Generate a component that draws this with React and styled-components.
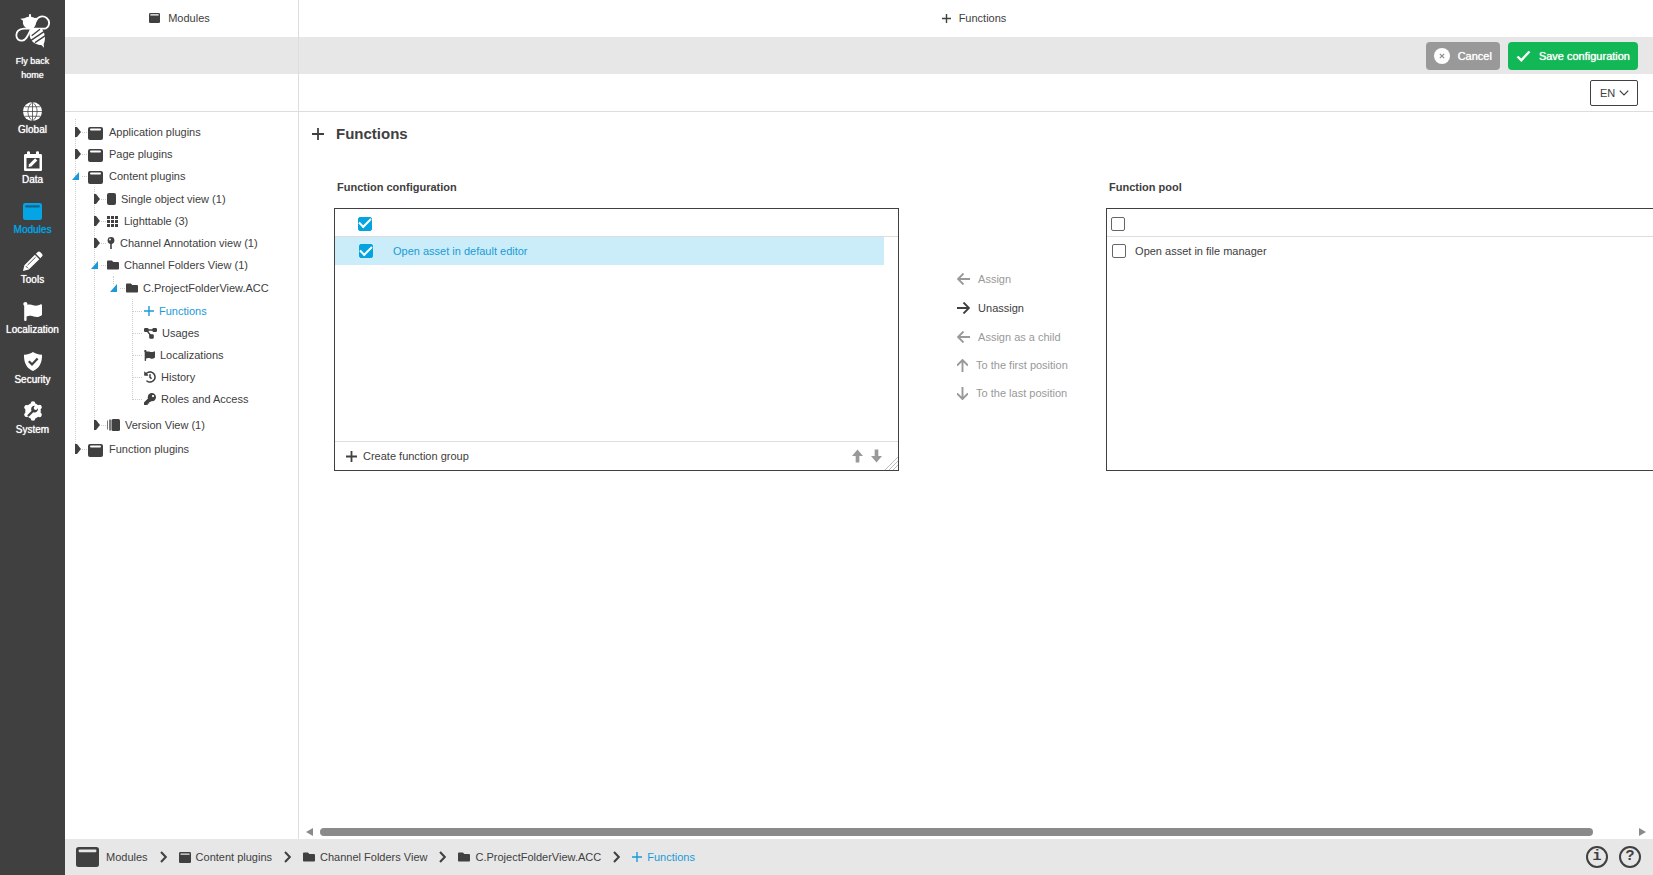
import React, { useState } from 'react';
import styled, { createGlobalStyle, css } from 'styled-components';
import { FaFlag, FaFolder, FaHistory, FaKey } from 'react-icons/fa';

const DARK = '#404040';
const BLUE = '#1a9bd7';
const GREY = '#999';

/* ---------- icons ---------- */

const WindowIcon = ({ width = 11, height = 10, bar = '#fff' }) => (
    <svg width={width} height={height} viewBox="0 0 22 20" preserveAspectRatio="none" aria-hidden="true">
        <rect width="22" height="20" rx="2.5" fill="currentColor" />
        <rect x="2.5" y="2.6" width="17" height="2.6" rx="1" fill={bar} />
    </svg>
);

const TreeWindowIcon = () => (
    <svg width="15" height="18" viewBox="0 0 15 18" aria-hidden="true">
        <rect y="4" width="15" height="13" rx="2" fill="currentColor" />
        <rect x="2" y="5.5" width="11" height="2" rx="1" fill="#fff" />
    </svg>
);

const PlusIcon = ({ size = 10, stroke = 1.4 }) => (
    <svg width={size} height={size} viewBox={`0 0 ${size} ${size}`} aria-hidden="true">
        <path d={`M${size / 2} 0V${size}M0 ${size / 2}H${size}`} stroke="currentColor" strokeWidth={stroke} />
    </svg>
);

const BeeIcon = () => (
    <svg width="35" height="34" viewBox="45 41 105 102" fill="none" aria-hidden="true">
        <path d="M90 85C100 79 104 70 108 62C113 47 130 45 140 53C151 62 149 78 138 84C135 85 131 85 124 85H72C57 86 49 94 49 105C49 116 57 122 67 121C80 119 84 104 92 88" stroke="#fff" strokeWidth="5.4" strokeLinejoin="round" />
        <path d="M88 41H92L94 50C98 50 101 51 104 53L112 52L107 60C110 68 107 77 100 84H80C71 78 67 70 69 61L61 55L73 54C77 51 82 50 86 50Z" fill="#fff" />
        <path d="M93 86C87 97 88 110 94 119C100 129 113 134 124 134L132 142L131 131C137 119 137 101 126 86Z" fill="#fff" />
        <path d="M95 106L120 87M93 120L132 94M105 127L136 106" stroke={DARK} strokeWidth="4" />
    </svg>
);

const GlobeIcon = () => (
    <svg width="19" height="19" viewBox="0 0 20 20" fill="none" aria-hidden="true">
        <circle cx="10" cy="10" r="10" fill="currentColor" />
        <path d="M10 0V20M0 10H20M2 5H18M2 15H18M10 0C3.5 5 3.5 15 10 20M10 0C16.5 5 16.5 15 10 20" stroke={DARK} strokeWidth=".8" />
    </svg>
);

const CalendarIcon = () => (
    <svg width="18" height="20" viewBox="0 0 18 20" aria-hidden="true">
        <path fill="currentColor" fillRule="evenodd" d="M3 1.5C3-.3 6-.3 6 1.5V3h6V1.5c0-1.8 3-1.8 3 0V3h1.5c1 0 1.5.6 1.5 1.5v14c0 1-.5 1.5-1.5 1.5h-15C.5 20 0 19.5 0 18.5v-14C0 3.6.5 3 1.5 3H3zM2.5 7v10.5h13V7z" />
        <path fill="currentColor" d="M4.5 16l.6-2.8 6-6 2.2 2.2-6 6z" />
    </svg>
);

const PencilIcon = () => (
    <svg width="20" height="20" viewBox="0 0 20 20" aria-hidden="true">
        <path fill="currentColor" d="M14.5 1.2c.9-.9 2-.9 2.9 0l1.5 1.5c.9.9.9 2 0 2.9L17.3 7.2 12.9 2.8zM11.9 3.8l4.4 4.4L5.8 18.6 0 20l1.4-5.8z" />
        <path d="M4.5 14.2L12.6 6.2M2.8 15.1L5 17.3" stroke={DARK} strokeWidth=".9" />
    </svg>
);

const ShieldIcon = () => (
    <svg width="18" height="19" viewBox="0 0 18 19" aria-hidden="true">
        <path fill="currentColor" d="M9 0c2 1.6 5 2.5 9 2.7C18.3 11 15 16.5 9 19 3 16.5-.3 11 0 2.7 4 2.5 7 1.6 9 0z" />
        <path d="M4.8 9.3L8 12.4L13.6 6.4" fill="none" stroke={DARK} strokeWidth="2.2" />
    </svg>
);

const SystemIcon = () => (
    <svg width="20" height="20" viewBox="0 0 20 20" aria-hidden="true">
        <circle cx="10" cy="10" r="7.8" fill="currentColor" />
        <g stroke="currentColor" strokeWidth="4.6" strokeLinecap="round">
            <path d="M10 2.5v15M3.5 6.3l13 7.5M3.5 13.7l13-7.5" />
        </g>
        <path d="M5.5 14.5L10.5 9.5" stroke={DARK} strokeWidth="2.2" strokeLinecap="round" />
        <path d="M14.8 7.2a3.4 3.4 0 1 1-3-2.5L10.7 7l.8 1.7 1.8.2z" fill={DARK} />
    </svg>
);

const GridIcon = () => (
    <svg width="12" height="11" viewBox="0 0 12 11" fill="currentColor" aria-hidden="true">
        {[0, 4, 8].map(y => [0, 4, 8].map(x => <rect key={`${x}${y}`} x={x} y={y} width="3" height="3" />))}
    </svg>
);

const PageIcon = () => (
    <svg width="9" height="12" viewBox="0 0 9 12" aria-hidden="true">
        <rect width="9" height="12" rx="2" fill="currentColor" />
    </svg>
);

const PinIcon = () => (
    <svg width="8" height="12" viewBox="0 0 8 12" aria-hidden="true">
        <circle cx="4" cy="3.5" r="3.4" fill="currentColor" />
        <path d="M4 6v6" stroke="currentColor" strokeWidth="1.6" />
        <circle cx="3" cy="2.5" r=".9" fill="#fff" />
    </svg>
);

const NodesIcon = () => (
    <svg width="13" height="12" viewBox="0 0 13 12" aria-hidden="true">
        <path d="M2.5 3H10.5M2.5 3L7.5 9.5" stroke="currentColor" strokeWidth="1.4" />
        <rect y="1" width="4.6" height="4" rx="1.2" fill="currentColor" />
        <rect x="8.4" y="1" width="4.6" height="4" rx="1.2" fill="currentColor" />
        <rect x="5.2" y="7.2" width="4.6" height="4.6" rx="1.2" fill="currentColor" />
    </svg>
);

const VersionIcon = () => (
    <svg width="13" height="12" viewBox="0 0 13 12" fill="currentColor" aria-hidden="true">
        <rect x="4.5" width="8.5" height="12" rx="1.5" />
        <rect x="2.3" y=".5" width="1.4" height="11" />
        <rect y="1.5" width="1" height="9" opacity=".7" />
    </svg>
);

const ArrowIcon = ({ turn = 0 }) => (
    <svg width={turn % 180 ? 11 : 13} height={turn % 180 ? 13 : 12} viewBox={turn % 180 ? '1 0 11 13' : '0 0.5 13 12'} fill="none" aria-hidden="true">
        <path d="M13 6.5H1M6.5 1L1 6.5L6.5 12" stroke="currentColor" strokeWidth="1.9" transform={`rotate(${turn} 6.5 6.5)`} />
    </svg>
);

const BoldArrowIcon = ({ down }) => (
    <svg width="11" height="14" viewBox="0 0 12 14" aria-hidden="true">
        <path d="M6 0L12 7H8V14H4V7H0Z" fill="currentColor" transform={down ? 'rotate(180 6 7)' : undefined} />
    </svg>
);

const ChevronIcon = () => (
    <svg width="7" height="12" viewBox="0 0 7 12" fill="none" aria-hidden="true">
        <path d="M1 1L5.8 6L1 11" stroke="currentColor" strokeWidth="2" />
    </svg>
);

/* ---------- tree ---------- */

const TREE = [
    { label: 'Application plugins', icon: <TreeWindowIcon /> },
    { label: 'Page plugins', icon: <TreeWindowIcon /> },
    {
        label: 'Content plugins', icon: <TreeWindowIcon />, children: [
            { label: 'Single object view (1)', icon: <PageIcon /> },
            { label: 'Lighttable (3)', icon: <GridIcon /> },
            { label: 'Channel Annotation view (1)', icon: <PinIcon /> },
            {
                label: 'Channel Folders View (1)', icon: <FaFolder size={12} />, children: [
                    {
                        label: 'C.ProjectFolderView.ACC', icon: <FaFolder size={12} />, children: [
                            { label: 'Functions', icon: <PlusIcon />, leaf: true, active: true },
                            { label: 'Usages', icon: <NodesIcon />, leaf: true },
                            { label: 'Localizations', icon: <FaFlag size={11} />, leaf: true },
                            { label: 'History', icon: <FaHistory size={12} />, leaf: true },
                            { label: 'Roles and Access', icon: <FaKey size={12} />, leaf: true },
                        ],
                    },
                ],
            },
            { label: 'Version View (1)', icon: <VersionIcon /> },
        ],
    },
    { label: 'Function plugins', icon: <TreeWindowIcon /> },
];

const TreeToggle = ({ open }) => (
    <svg width="16" height="16" viewBox="0 0 16 16" aria-hidden="true">
        {open
            ? <path d="M7 4V12H0Z" fill={BLUE} />
            : <path d="M3 3H5L9 8L5 13H3Z" fill={DARK} />}
        <path d="M10 8.5H15" stroke="#ccc" strokeDasharray="1 1" />
    </svg>
);

const TreeBranch = ({ nodes, depth = 0 }) => (
    <TreeList $depth={depth} $single={nodes.length === 1}>
        {nodes.map(node => (
            <li key={node.label}>
                <TreeRow>
                    {node.leaf
                        ? <LeafLine />
                        : <ToggleButton aria-label={`Toggle ${node.label}`}><TreeToggle open={!!node.children} /></ToggleButton>}
                    <TreeLink href="#" $active={node.active} $root={depth === 0}>{node.icon}{node.label}</TreeLink>
                </TreeRow>
                {node.children && <TreeBranch nodes={node.children} depth={depth + 1} />}
            </li>
        ))}
    </TreeList>
);

/* ---------- page ---------- */

const NAV = [
    { label: 'Global', icon: <GlobeIcon /> },
    { label: 'Data', icon: <CalendarIcon /> },
    { label: 'Modules', icon: <WindowIcon width={19} height={17} bar="#17618a" />, active: true },
    { label: 'Tools', icon: <PencilIcon /> },
    { label: 'Localization', icon: <FaFlag size={19} /> },
    { label: 'Security', icon: <ShieldIcon /> },
    { label: 'System', icon: <SystemIcon /> },
];

const ACTIONS = [
    { label: 'Assign', turn: 0 },
    { label: 'Unassign', turn: 180, enabled: true },
    { label: 'Assign as a child', turn: 0 },
    { label: 'To the first position', turn: 90, vertical: true },
    { label: 'To the last position', turn: 270, vertical: true },
];

const CRUMBS = [
    { label: 'Modules', icon: <WindowIcon width={23} height={20} bar="#e7e7e7" />, large: true },
    { label: 'Content plugins', icon: <WindowIcon width={12} height={11} bar="#e7e7e7" /> },
    { label: 'Channel Folders View', icon: <FaFolder size={12} /> },
    { label: 'C.ProjectFolderView.ACC', icon: <FaFolder size={12} /> },
    { label: 'Functions', icon: <PlusIcon size={10} />, active: true },
];

const App = () => {
    const [allAssigned, setAllAssigned] = useState(true);
    const [editor, setEditor] = useState(true);
    const [allPool, setAllPool] = useState(false);
    const [manager, setManager] = useState(false);

    return (
        <Page>
            <GlobalStyle />
            <Sidebar>
                <HomeLink href="#"><BeeIcon /><span>Fly back<br />home</span></HomeLink>
                {NAV.map(item => (
                    <NavLink href="#" key={item.label} $active={item.active}>
                        <NavIcon>{item.icon}</NavIcon>
                        {item.label}
                    </NavLink>
                ))}
            </Sidebar>

            <Content>
                <Columns>
                    <TreeColumn>
                        <PaneTitle><WindowIcon />Modules</PaneTitle>
                        <GreyBar />
                        <LanguageBar />
                        <nav aria-label="Modules"><TreeBranch nodes={TREE} /></nav>
                    </TreeColumn>

                    <MainColumn>
                        <PaneTitle><PlusIcon size={9} />Functions</PaneTitle>
                        <GreyBar>
                            <BarButton $color="#999">
                                <svg width="16" height="16" viewBox="0 0 16 16" aria-hidden="true">
                                    <circle cx="8" cy="8" r="8" fill="#fff" />
                                    <path d="M5.8 5.8L10.2 10.2M10.2 5.8L5.8 10.2" stroke="#888" strokeWidth="1.1" />
                                </svg>
                                Cancel
                            </BarButton>
                            <BarButton $color="#12b855">
                                <svg width="15" height="12" viewBox="0 0 14 12" fill="none" aria-hidden="true">
                                    <path d="M1 6.5L4.8 10.2L13 1.5" stroke="#fff" strokeWidth="2.4" />
                                </svg>
                                Save configuration
                            </BarButton>
                        </GreyBar>
                        <LanguageBar>
                            <SelectWrap>
                                <LanguageSelect aria-label="Language" defaultValue="EN">
                                    <option>EN</option>
                                    <option>DE</option>
                                </LanguageSelect>
                                <svg width="10" height="6" viewBox="0 0 10 6" fill="none" aria-hidden="true">
                                    <path d="M.7.7L5 5L9.3.7" stroke={DARK} strokeWidth="1.2" />
                                </svg>
                            </SelectWrap>
                        </LanguageBar>

                        <Scroller>
                            <Heading><PlusIcon size={12} stroke={1.8} />Functions</Heading>
                            <Assignment>
                                <Panel>
                                    <PanelTitle>Function configuration</PanelTitle>
                                    <PanelBox>
                                        <PanelHead $wide>
                                            <Check type="checkbox" aria-label="Select all assigned functions" checked={allAssigned} onChange={() => setAllAssigned(!allAssigned)} />
                                        </PanelHead>
                                        <PanelBody $gutter>
                                            <OptionRow $wide $selected={editor}>
                                                <Check type="checkbox" checked={editor} onChange={() => setEditor(!editor)} />
                                                Open asset in default editor
                                            </OptionRow>
                                        </PanelBody>
                                        <PanelFoot>
                                            <GroupButton><PlusIcon size={11} stroke={1.8} />Create function group</GroupButton>
                                            <OrderButton aria-label="Move up"><BoldArrowIcon /></OrderButton>
                                            <OrderButton aria-label="Move down"><BoldArrowIcon down /></OrderButton>
                                            <ResizeHandle width="14" height="14" viewBox="0 0 14 14" aria-hidden="true">
                                                <path d="M1 14L14 1M5 14L14 5M9 14L14 9" stroke="#bbb" />
                                            </ResizeHandle>
                                        </PanelFoot>
                                    </PanelBox>
                                </Panel>

                                <Actions>
                                    {ACTIONS.map(action => (
                                        <ActionButton key={action.label} disabled={!action.enabled} $vertical={action.vertical}>
                                            <ArrowIcon turn={action.turn} />
                                            {action.label}
                                        </ActionButton>
                                    ))}
                                </Actions>

                                <Panel>
                                    <PanelTitle>Function pool</PanelTitle>
                                    <PanelBox>
                                        <PanelHead>
                                            <Check type="checkbox" aria-label="Select all pool functions" checked={allPool} onChange={() => setAllPool(!allPool)} />
                                        </PanelHead>
                                        <PanelBody>
                                            <OptionRow>
                                                <Check type="checkbox" checked={manager} onChange={() => setManager(!manager)} />
                                                Open asset in file manager
                                            </OptionRow>
                                        </PanelBody>
                                    </PanelBox>
                                </Panel>
                            </Assignment>
                        </Scroller>

                        <ScrollBar aria-hidden="true">
                            <svg width="7" height="8" viewBox="0 0 7 8"><path d="M7 0V8L0 4Z" fill="#8a8a8a" /></svg>
                            <ScrollTrack><ScrollThumb /></ScrollTrack>
                            <svg width="7" height="8" viewBox="0 0 7 8"><path d="M0 0V8L7 4Z" fill="#8a8a8a" /></svg>
                        </ScrollBar>
                    </MainColumn>
                </Columns>

                <Footer>
                    {CRUMBS.map((crumb, i) => (
                        <React.Fragment key={crumb.label}>
                            {i > 0 && <ChevronIcon />}
                            <Crumb href="#" $large={crumb.large} $active={crumb.active}>{crumb.icon}{crumb.label}</Crumb>
                        </React.Fragment>
                    ))}
                    <FooterTools>
                        <RoundButton aria-label="Information">i</RoundButton>
                        <RoundButton aria-label="Help">?</RoundButton>
                    </FooterTools>
                </Footer>
            </Content>
        </Page>
    );
};

const GlobalStyle = createGlobalStyle`
    * {
        box-sizing: border-box;
    }

    body {
        margin: 0;
        background: #fff;
        color: ${DARK};
        font: 11px/14px "Liberation Sans", Arial, sans-serif;
    }

    button, select, input {
        font: inherit;
        color: inherit;
        margin: 0;
    }

    button {
        display: flex;
        align-items: center;
        padding: 0;
        border: 0;
        background: none;
        cursor: pointer;
    }

    a {
        color: inherit;
        text-decoration: none;
    }

    svg {
        display: block;
        flex: none;
    }
`;

const Page = styled.div`
    display: flex;
    min-height: 100vh;
`;

const Sidebar = styled.nav`
    display: flex;
    flex: 0 0 65px;
    flex-direction: column;
    background: ${DARK};
    color: #fff;
    font-size: 10px;
    text-align: center;
    text-shadow: 0 0 1px currentColor;
`;

const HomeLink = styled.a`
    display: flex;
    flex-direction: column;
    align-items: center;
    gap: 6px;
    padding: 14px 0 17px;
    font-size: 9px;
`;

const NavLink = styled.a`
    display: flex;
    flex-direction: column;
    align-items: center;
    height: 50px;
    color: ${p => (p.$active ? '#05a4e4' : '#fff')};
`;

const NavIcon = styled.span`
    display: flex;
    align-items: center;
    height: 24px;
`;

const Content = styled.div`
    display: flex;
    flex: 1;
    flex-direction: column;
    min-width: 0;
`;

const Columns = styled.div`
    display: flex;
    flex: 1;
`;

const TreeColumn = styled.aside`
    flex: 0 0 234px;
    border-right: 1px solid #ddd;
`;

const MainColumn = styled.main`
    display: flex;
    flex: 1;
    flex-direction: column;
    min-width: 0;
`;

const PaneTitle = styled.div`
    display: flex;
    align-items: center;
    justify-content: center;
    gap: 8px;
    height: 37px;
    padding: 0 4px 1px 0;
`;

const GreyBar = styled.div`
    display: flex;
    align-items: center;
    justify-content: flex-end;
    gap: 8px;
    height: 37px;
    padding-right: 15px;
    background: #e7e7e7;
`;

const LanguageBar = styled.div`
    display: flex;
    align-items: center;
    justify-content: flex-end;
    height: 38px;
    padding-right: 15px;
    border-bottom: 1px solid #ddd;
`;

const BarButton = styled.button`
    gap: 8px;
    height: 28px;
    padding: 0 8px;
    border-radius: 4px;
    background: ${p => p.$color};
    color: #fff;
    text-shadow: 0 0 1px currentColor;
`;

const SelectWrap = styled.div`
    position: relative;

    svg {
        position: absolute;
        top: 10px;
        right: 9px;
        pointer-events: none;
    }
`;

const LanguageSelect = styled.select`
    width: 48px;
    height: 26px;
    padding: 0 0 0 9px;
    border: 1px solid ${DARK};
    border-radius: 2px;
    background: #fff;
    appearance: none;
`;

const TreeList = styled.ul`
    position: relative;
    margin: 0;
    padding: ${p => (p.$depth ? '1px 0 2px 19px' : '9px 0 0 7px')};
    list-style: none;

    &::before {
        position: absolute;
        top: ${p => (p.$depth ? 0 : 7)}px;
        bottom: ${p => (p.$single ? 'auto' : '12px')};
        left: ${p => (p.$depth ? 22 : 10)}px;
        height: ${p => (p.$single ? '8px' : 'auto')};
        border-left: 1px dotted #ccc;
        content: '';
    }
`;

const TreeRow = styled.div`
    position: relative;
    display: flex;
    align-items: center;
    height: 22px;
`;

const ToggleButton = styled.button`
    flex: 0 0 16px;
`;

const LeafLine = styled.span`
    width: 9px;
    margin: 0 2px 0 4px;
    border-top: 1px dotted #ccc;
`;

const TreeLink = styled.a`
    display: flex;
    align-items: center;
    gap: ${p => (p.$root ? 6 : 5)}px;
    color: ${p => (p.$active ? BLUE : 'inherit')};
    white-space: nowrap;
`;

const Scroller = styled.div`
    flex: 1;
    overflow: hidden;
`;

const Heading = styled.h1`
    display: flex;
    align-items: center;
    gap: 12px;
    margin: 0;
    padding: 12px 0 0 13px;
    font-size: 15px;
    line-height: 20px;
`;

const Assignment = styled.div`
    display: grid;
    grid-template-columns: 1fr 207px 1fr;
    width: 104%;
    padding: 36px 36px 0 35px;
`;

const Panel = styled.section`
    min-width: 0;
`;

const PanelTitle = styled.h2`
    margin: 0 0 14px;
    padding-left: 3px;
    font-size: 11px;
    line-height: 14px;
`;

const PanelBox = styled.div`
    display: flex;
    flex-direction: column;
    height: 263px;
    border: 1px solid ${DARK};
`;

const PanelHead = styled.div`
    display: flex;
    align-items: center;
    height: 28px;
    padding: 2px 0 0 ${p => (p.$wide ? 23 : 4)}px;
    border-bottom: 1px solid #ddd;
`;

const PanelBody = styled.div`
    flex: 1;
    padding-right: ${p => (p.$gutter ? 14 : 0)}px;
`;

const OptionRow = styled.label`
    display: flex;
    align-items: center;
    gap: ${p => (p.$wide ? 20 : 9)}px;
    height: 28px;
    padding-left: ${p => (p.$wide ? 24 : 5)}px;

    ${p => p.$selected && css`
        background: #cbedf9;
        color: ${BLUE};
    `}
`;

const Check = styled.input`
    display: grid;
    place-items: center;
    width: 14px;
    height: 14px;
    border: 1px solid #666;
    border-radius: 2px;
    background: #fff;
    appearance: none;

    &:checked {
        border-color: #05a4e0;
        background: #05a4e0;
    }

    &:checked::before {
        width: 10px;
        height: 5px;
        margin-bottom: 4px;
        border: solid #fff;
        border-width: 0 0 2px 2px;
        transform: rotate(-45deg);
        content: '';
    }
`;

const PanelFoot = styled.div`
    position: relative;
    display: flex;
    align-items: center;
    gap: 8px;
    height: 29px;
    padding: 0 16px 0 11px;
    border-top: 1px solid #ddd;
`;

const GroupButton = styled.button`
    gap: 6px;
    margin-right: auto;
`;

const OrderButton = styled.button`
    color: ${GREY};
`;

const ResizeHandle = styled.svg`
    position: absolute;
    right: 0;
    bottom: 0;
`;

const Actions = styled.div`
    padding: 84px 0 0 58px;
`;

const ActionButton = styled.button`
    gap: 8px;
    height: ${p => (p.$vertical ? 28 : 29)}px;
    color: ${p => (p.disabled ? GREY : DARK)};
`;

const ScrollBar = styled.div`
    display: flex;
    align-items: center;
    gap: 7px;
    height: 15px;
    padding: 0 7px;
`;

const ScrollTrack = styled.div`
    flex: 1;
`;

const ScrollThumb = styled.div`
    width: 97%;
    height: 8px;
    border-radius: 4px;
    background: #8a8a8a;
`;

const Footer = styled.footer`
    display: flex;
    align-items: center;
    gap: 12px;
    height: 36px;
    padding: 0 12px 0 11px;
    background: #e7e7e7;
`;

const Crumb = styled.a`
    display: flex;
    align-items: center;
    gap: ${p => (p.$large ? 7 : 5)}px;
    color: ${p => (p.$active ? BLUE : 'inherit')};
`;

const FooterTools = styled.div`
    display: flex;
    gap: 11px;
    margin-left: auto;
`;

const RoundButton = styled.button`
    justify-content: center;
    width: 22px;
    height: 22px;
    border: 2px solid ${DARK};
    border-radius: 50%;
    font: bold 15px/18px "Liberation Mono", monospace;
`;

export default App;
